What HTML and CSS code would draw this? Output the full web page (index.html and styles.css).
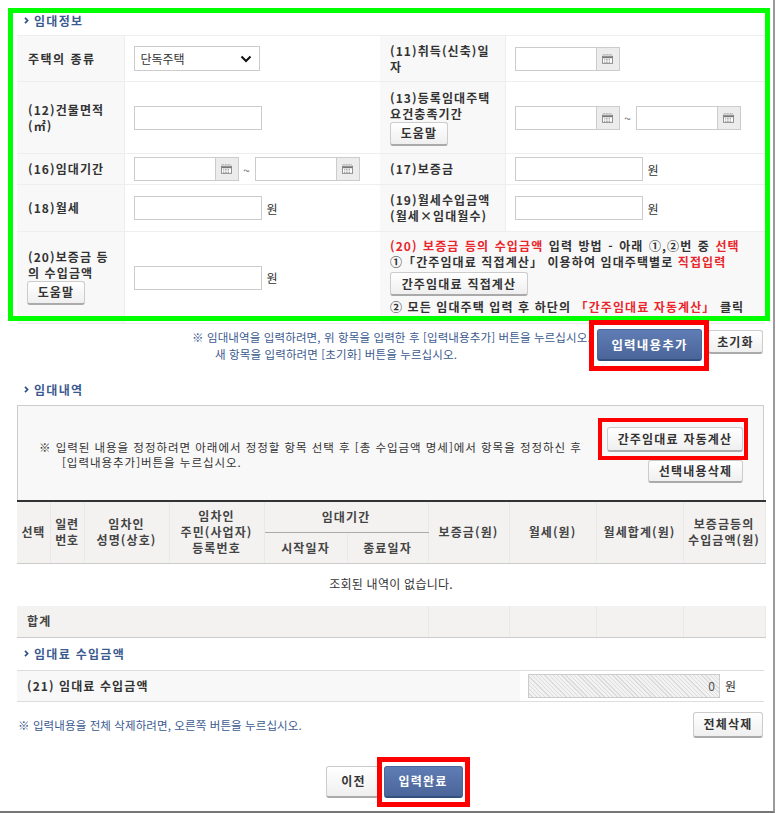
FILE: index.html
```html
<!DOCTYPE html>
<html lang="ko">
<head>
    <meta charset="UTF-8">
    <meta name="viewport" content="width=device-width, initial-scale=1.0">
    <title>임대정보</title>
    <link rel="stylesheet" href="styles.css">
</head>
<body>

<svg class="defs" width="0" height="0">
    <symbol id="cal" viewBox="0 0 14 12">
        <path d="M1 .5h12" stroke="#777" stroke-dasharray="1 1" fill="none"/>
        <rect x=".5" y="2.5" width="13" height="9" fill="#fff" stroke="#777"/>
        <rect x="1" y="3" width="12" height="2" fill="#777"/>
        <path d="M3 6.5h8M3 8.5h8M3 10.5h8" stroke="#666" stroke-dasharray="1 1" fill="none"/>
    </symbol>
    <symbol id="chev" viewBox="0 0 5 7">
        <path d="M1 .8 3.6 3.5 1 6.2" stroke="#2f4f87" stroke-width="1.7" fill="none"/>
    </symbol>
</svg>

<div class="page">
    <h3 class="sec-title first"><svg class="chev"><use href="#chev"/></svg>임대정보</h3>
    <table class="form-table">
        <colgroup>
            <col class="c-th1"><col class="c-td1"><col class="c-th2"><col class="c-td2">
        </colgroup>
        <tr class="r1">
            <th class="wide">주택의 종류</th>
            <td>
                <div class="select-box">단독주택<svg width="12" height="8" viewBox="0 0 12 8"><path d="M1.5 1.5 6 6l4.5-4.5" stroke="#111" stroke-width="2" fill="none"/></svg></div>
            </td>
            <th>(11)취득(신축)일<br>자</th>
            <td>
                <div class="date-range">
                    <div class="date"><span class="date-in"></span><span class="date-btn"><svg><use href="#cal"/></svg></span></div>
                </div>
            </td>
        </tr>
        <tr class="r2">
            <th>(12)건물면적<br>(㎡)</th>
            <td><span class="inp"></span></td>
            <th>(13)등록임대주택<br>요건충족기간<button class="btn btn-help">도움말</button></th>
            <td>
                <div class="date-range">
                    <div class="date"><span class="date-in"></span><span class="date-btn"><svg><use href="#cal"/></svg></span></div>
                    <span class="tilde">~</span>
                    <div class="date"><span class="date-in"></span><span class="date-btn"><svg><use href="#cal"/></svg></span></div>
                </div>
            </td>
        </tr>
        <tr class="r3">
            <th>(16)임대기간</th>
            <td>
                <div class="date-range">
                    <div class="date"><span class="date-in"></span><span class="date-btn"><svg><use href="#cal"/></svg></span></div>
                    <span class="tilde">~</span>
                    <div class="date"><span class="date-in"></span><span class="date-btn"><svg><use href="#cal"/></svg></span></div>
                </div>
            </td>
            <th>(17)보증금</th>
            <td><span class="inp"></span><span class="won">원</span></td>
        </tr>
        <tr class="r4">
            <th>(18)월세</th>
            <td><span class="inp"></span><span class="won">원</span></td>
            <th>(19)월세수입금액<br>(월세×임대월수)</th>
            <td><span class="inp"></span><span class="won">원</span></td>
        </tr>
        <tr class="r5">
            <th>(20)보증금 등<br>의 수입금액<button class="btn btn-help">도움말</button></th>
            <td><span class="inp"></span><span class="won">원</span></td>
            <td colspan="2" class="guide">
                <p class="guide-first"><span class="red">(20) 보증금 등의 수입금액</span> 입력 방법 - 아래 ①,②번 중 <span class="red">선택</span></p>
                <p>①「간주임대료 직접계산」 이용하여 임대주택별로 <span class="red">직접입력</span></p>
                <button class="btn btn-direct">간주임대료 직접계산</button>
                <p>② 모든 임대주택 입력 후 하단의 <span class="red">「간주임대료 자동계산」</span> 클릭</p>
            </td>
        </tr>
    </table>

    <div class="add-row">
        <div class="add-note">
            <p>※ 임대내역을 입력하려면, 위 항목을 입력한 후 [입력내용추가] 버튼을 누르십시오.</p>
            <p class="indent">새 항목을 입력하려면 [초기화] 버튼을 누르십시오.</p>
        </div>
        <button class="btn btn-blue btn-add">입력내용추가</button>
        <button class="btn btn-reset">초기화</button>
    </div>

    <h3 class="sec-title second"><svg class="chev"><use href="#chev"/></svg>임대내역</h3>
    <div class="edit-box">
        <div class="edit-text">
            <p>※ 입력된 내용을 정정하려면 아래에서 정정할 항목 선택 후 [총 수입금액 명세]에서 항목을 정정하신 후</p>
            <p class="indent2">[입력내용추가]버튼을 누르십시오.</p>
        </div>
        <div class="edit-btns">
            <button class="btn btn-auto">간주임대료 자동계산</button>
            <button class="btn btn-del">선택내용삭제</button>
        </div>
    </div>

    <table class="list-table">
        <colgroup>
            <col class="l1"><col class="l2"><col class="l3"><col class="l4"><col class="l5"><col class="l6"><col class="l7"><col class="l8"><col class="l9"><col class="l10">
        </colgroup>
        <tr class="h1">
            <th rowspan="2" class="tight">선택</th>
            <th rowspan="2" class="tight">일련<br>번호</th>
            <th rowspan="2">임차인<br>성명(상호)</th>
            <th rowspan="2">임차인<br>주민(사업자)<br>등록번호</th>
            <th colspan="2" class="period">임대기간</th>
            <th rowspan="2">보증금(원)</th>
            <th rowspan="2">월세(원)</th>
            <th rowspan="2">월세합계(원)</th>
            <th rowspan="2">보증금등의<br>수입금액(원)</th>
        </tr>
        <tr class="h2">
            <th>시작일자</th>
            <th>종료일자</th>
        </tr>
        <tr class="empty">
            <td colspan="10">조회된 내역이 없습니다.</td>
        </tr>
        <tr class="sum">
            <th colspan="6">합계</th>
            <td></td><td></td><td></td><td></td>
        </tr>
    </table>

    <h3 class="sec-title third"><svg class="chev"><use href="#chev"/></svg>임대료 수입금액</h3>
    <div class="income">
        <div class="income-label">(21) 임대료 수입금액</div>
        <div class="income-val"><span class="hatch">0</span><span class="won">원</span></div>
    </div>

    <div class="del-row">
        <p>※ 입력내용을 전체 삭제하려면, 오른쪽 버튼을 누르십시오.</p>
        <button class="btn btn-delall">전체삭제</button>
    </div>

    <div class="foot">
        <button class="btn btn-prev">이전</button>
        <button class="btn btn-blue btn-done">입력완료</button>
    </div>

    <!-- 표시 박스 -->
    <div class="mark mark-green"></div>
    <div class="mark mark-add"></div>
    <div class="mark mark-auto"></div>
    <div class="mark mark-done"></div>
</div>

</body>
</html>
```

FILE: styles.css
```css
* {
    box-sizing: border-box;
}
body {
    margin: 0;
    background: #fff;
    font-family: "Noto Sans CJK KR", "Liberation Sans", sans-serif;
    font-size: 12px;
    color: #333;
}
p {
    margin: 0;
}
.defs {
    position: absolute;
}
.page {
    position: relative;
    width: 775px;
    height: 813px;
    padding: 8px 9px 0 17px;
    border-right: 2px solid #9a9a9a;
    border-bottom: 2px solid #777;
    overflow: hidden;
}
.sec-title {
    display: flex;
    align-items: center;
    height: 27px;
    margin: 0;
    font-size: 12px;
    font-weight: 700;
    color: #3b5a8f;
    letter-spacing: 1.3px;
}
.sec-title.first {
    padding-bottom: 3px;
}
.sec-title.second {
    padding-bottom: 4px;
}
.sec-title.third {
    height: 32px;
}
.chev {
    width: 5px;
    height: 7px;
    margin: 0 5px 0 7px;
}
table {
    width: 748px;
    border-collapse: collapse;
    table-layout: fixed;
}
.form-table {
    border-top: 1px solid #ddd;
    border-bottom: 1px solid #ddd;
}
.form-table th,
.form-table td {
    border: 1px solid #eee;
    border-left: 0;
    border-right: 0;
    padding: 0 0 0 9px;
    vertical-align: middle;
}
.form-table th {
    padding-left: 10px;
    background: #f8f8f8;
    text-align: left;
    font-weight: 700;
    line-height: 16px;
    letter-spacing: 1.1px;
    border-right: 1px solid #eee;
}
.form-table th:first-child {
    padding-left: 11px;
}
.form-table th.wide {
    letter-spacing: 1.5px;
}
.form-table .r5 th {
    padding-bottom: 2px;
}
.c-th1 { width: 107px; }
.c-td1 { width: 256px; }
.c-th2 { width: 125px; }
.c-td2 { width: 260px; }
.r1 { height: 46px; }
.r2 { height: 72px; }
.r3 { height: 31px; }
.r4 { height: 47px; }
.r5 { height: 92px; }
.form-table .guide {
    padding-left: 10px;
    padding-bottom: 2px;
    background: #f8f8f8;
    font-weight: 700;
    line-height: 16px;
    letter-spacing: 1.1px;
    white-space: nowrap;
}
.guide-first {
    word-spacing: 1px;
}
.guide .btn {
    margin: 2px 0 3px;
}
.red {
    color: #e8262c;
}
.btn {
    display: inline-block;
    height: 24px;
    padding: 0 10px;
    border: 1px solid #ccc;
    border-bottom: 2px solid #aaa;
    border-radius: 3px;
    background: linear-gradient(#fff, #efefef);
    color: #333;
    font-family: inherit;
    font-size: 12px;
    font-weight: 700;
    letter-spacing: 1.2px;
    line-height: 20px;
    vertical-align: top;
}
.btn-blue {
    background: linear-gradient(#5f7db5, #4a6599);
    border: 1px solid #4a6599;
    border-bottom: 2px solid #34507f;
    color: #fff;
}
.btn-help {
    display: block;
    width: 58px;
    padding: 0;
}
th:first-child .btn-help {
    margin-left: -1px;
}
.btn-direct {
    width: 138px;
    padding: 0;
}
.select-box {
    display: flex;
    align-items: center;
    justify-content: space-between;
    width: 126px;
    height: 25px;
    padding: 0 7px 0 6px;
    border: 1px solid #ccc;
    background: #fff;
    color: #333;
}
.inp {
    display: inline-block;
    width: 128px;
    height: 24px;
    border: 1px solid #ccc;
    background: #fff;
    vertical-align: middle;
}
.won {
    margin-left: 5px;
    vertical-align: middle;
}
.date-range {
    display: flex;
    align-items: center;
}
.date {
    display: flex;
    height: 24px;
}
.date-in {
    width: 81px;
    border: 1px solid #ccc;
    border-right: 0;
    background: #fff;
}
.date-btn {
    display: flex;
    align-items: center;
    justify-content: center;
    width: 24px;
    border: 1px solid #ccc;
    background: #ececec;
}
.date-btn svg {
    width: 11px;
    height: 10px;
}
.tilde {
    width: 16px;
    text-align: center;
    color: #666;
}
.add-row {
    display: flex;
    align-items: flex-start;
    height: 54px;
    padding-top: 5px;
}
.add-note {
    flex: 1;
    padding: 0 0 0 175px;
    color: #3b5a8f;
    line-height: 17px;
    font-size: 11.5px;
    letter-spacing: .12px;
    white-space: nowrap;
}
.add-note .indent {
    padding-left: 23px;
}
.btn-add {
    width: 105px;
    height: 32px;
    padding: 0;
    flex: none;
    font-size: 12.5px;
}
.btn-reset {
    width: 55px;
    height: 24px;
    padding: 0;
    margin: 1px 1px 0 6px;
    flex: none;
}
.edit-box {
    display: flex;
    justify-content: space-between;
    align-items: center;
    height: 95px;
    padding: 0 20px 0 21px;
    border: 1px solid #ccc;
    border-bottom: 0;
    background: #f8f8f8;
}
.edit-text {
    font-size: 11.5px;
    line-height: 15px;
    letter-spacing: .97px;
    white-space: nowrap;
    padding-top: 3px;
}
.indent2 {
    padding-left: 23px;
}
.edit-btns {
    display: flex;
    flex-direction: column;
    align-items: flex-end;
    gap: 8px;
    padding-top: 3px;
}
.btn-auto {
    width: 136px;
    height: 25px;
    padding: 0;
}
.btn-del {
    width: 95px;
    height: 23px;
    padding: 0;
}
.list-table {
    border-top: 2px solid #333;
}
.list-table th {
    background: #f3f2f1;
    border-right: 1px solid #e8e8e8;
    border-bottom: 1px solid #ccc;
    padding: 0;
    font-weight: 700;
    line-height: 16px;
    letter-spacing: 1.1px;
    color: #444;
}
.list-table th.tight {
    letter-spacing: .6px;
}
.l1 { width: 33px; }
.l2 { width: 34px; }
.l3 { width: 85px; }
.l4 { width: 95px; }
.l5 { width: 83px; }
.l6 { width: 81px; }
.l7 { width: 81px; }
.l8 { width: 87px; }
.l9 { width: 87px; }
.l10 { width: 82px; }
.h1 { height: 31px; }
.h2 { height: 31px; }
.list-table .period {
    border-bottom: 1px solid #aaa;
}
.empty {
    height: 43px;
}
.empty td {
    text-align: center;
    padding: 0;
    color: #333;
    padding-bottom: 3px;
    letter-spacing: .25px;
}
.sum {
    height: 31px;
}
.list-table .sum th {
    text-align: left;
    padding-left: 10px;
}
.sum td {
    background: #f3f2f1;
    border-right: 1px solid #e8e8e8;
    border-bottom: 1px solid #ccc;
}
.income {
    display: flex;
    height: 32px;
    border-top: 1px solid #ddd;
    border-bottom: 1px solid #ddd;
}
.income-label {
    display: flex;
    align-items: center;
    width: 503px;
    padding-left: 10px;
    background: #f8f8f8;
    font-weight: 700;
    letter-spacing: 1.1px;
}
.income-val {
    display: flex;
    align-items: center;
    padding-left: 8px;
}
.hatch {
    width: 192px;
    height: 24px;
    padding-right: 4px;
    border: 1px solid #ccc;
    background: repeating-linear-gradient(45deg, #f2f2f2 0, #f2f2f2 2px, #dcdcdc 2px, #dcdcdc 3px);
    text-align: right;
    line-height: 22px;
    color: #555;
}
.del-row {
    display: flex;
    align-items: center;
    justify-content: space-between;
    height: 41px;
    padding: 5px 1px 0 1px;
    color: #3b5a8f;
    font-size: 11.5px;
    letter-spacing: .1px;
}
.btn-delall {
    width: 70px;
    height: 26px;
    padding: 0;
}
.foot {
    display: flex;
    justify-content: center;
    gap: 2px;
    padding: 23px 0 0 0;
}
.btn-prev {
    width: 56px;
    height: 32px;
    padding: 0;
    margin-left: 7px;
}
.btn-done {
    width: 79px;
    height: 32px;
    padding: 0;
}
.mark {
    position: absolute;
    pointer-events: none;
}
.mark-green {
    left: 8px;
    top: 8px;
    width: 762px;
    height: 313px;
    border: 5px solid #00ff00;
}
.mark-add {
    left: 589px;
    top: 320px;
    width: 120px;
    height: 51px;
    border: 5px solid #ff0000;
}
.mark-auto {
    left: 598px;
    top: 418px;
    width: 150px;
    height: 42px;
    border: 4px solid #ff0000;
}
.mark-done {
    left: 377px;
    top: 757px;
    width: 93px;
    height: 50px;
    border: 5px solid #ff0000;
}
```
